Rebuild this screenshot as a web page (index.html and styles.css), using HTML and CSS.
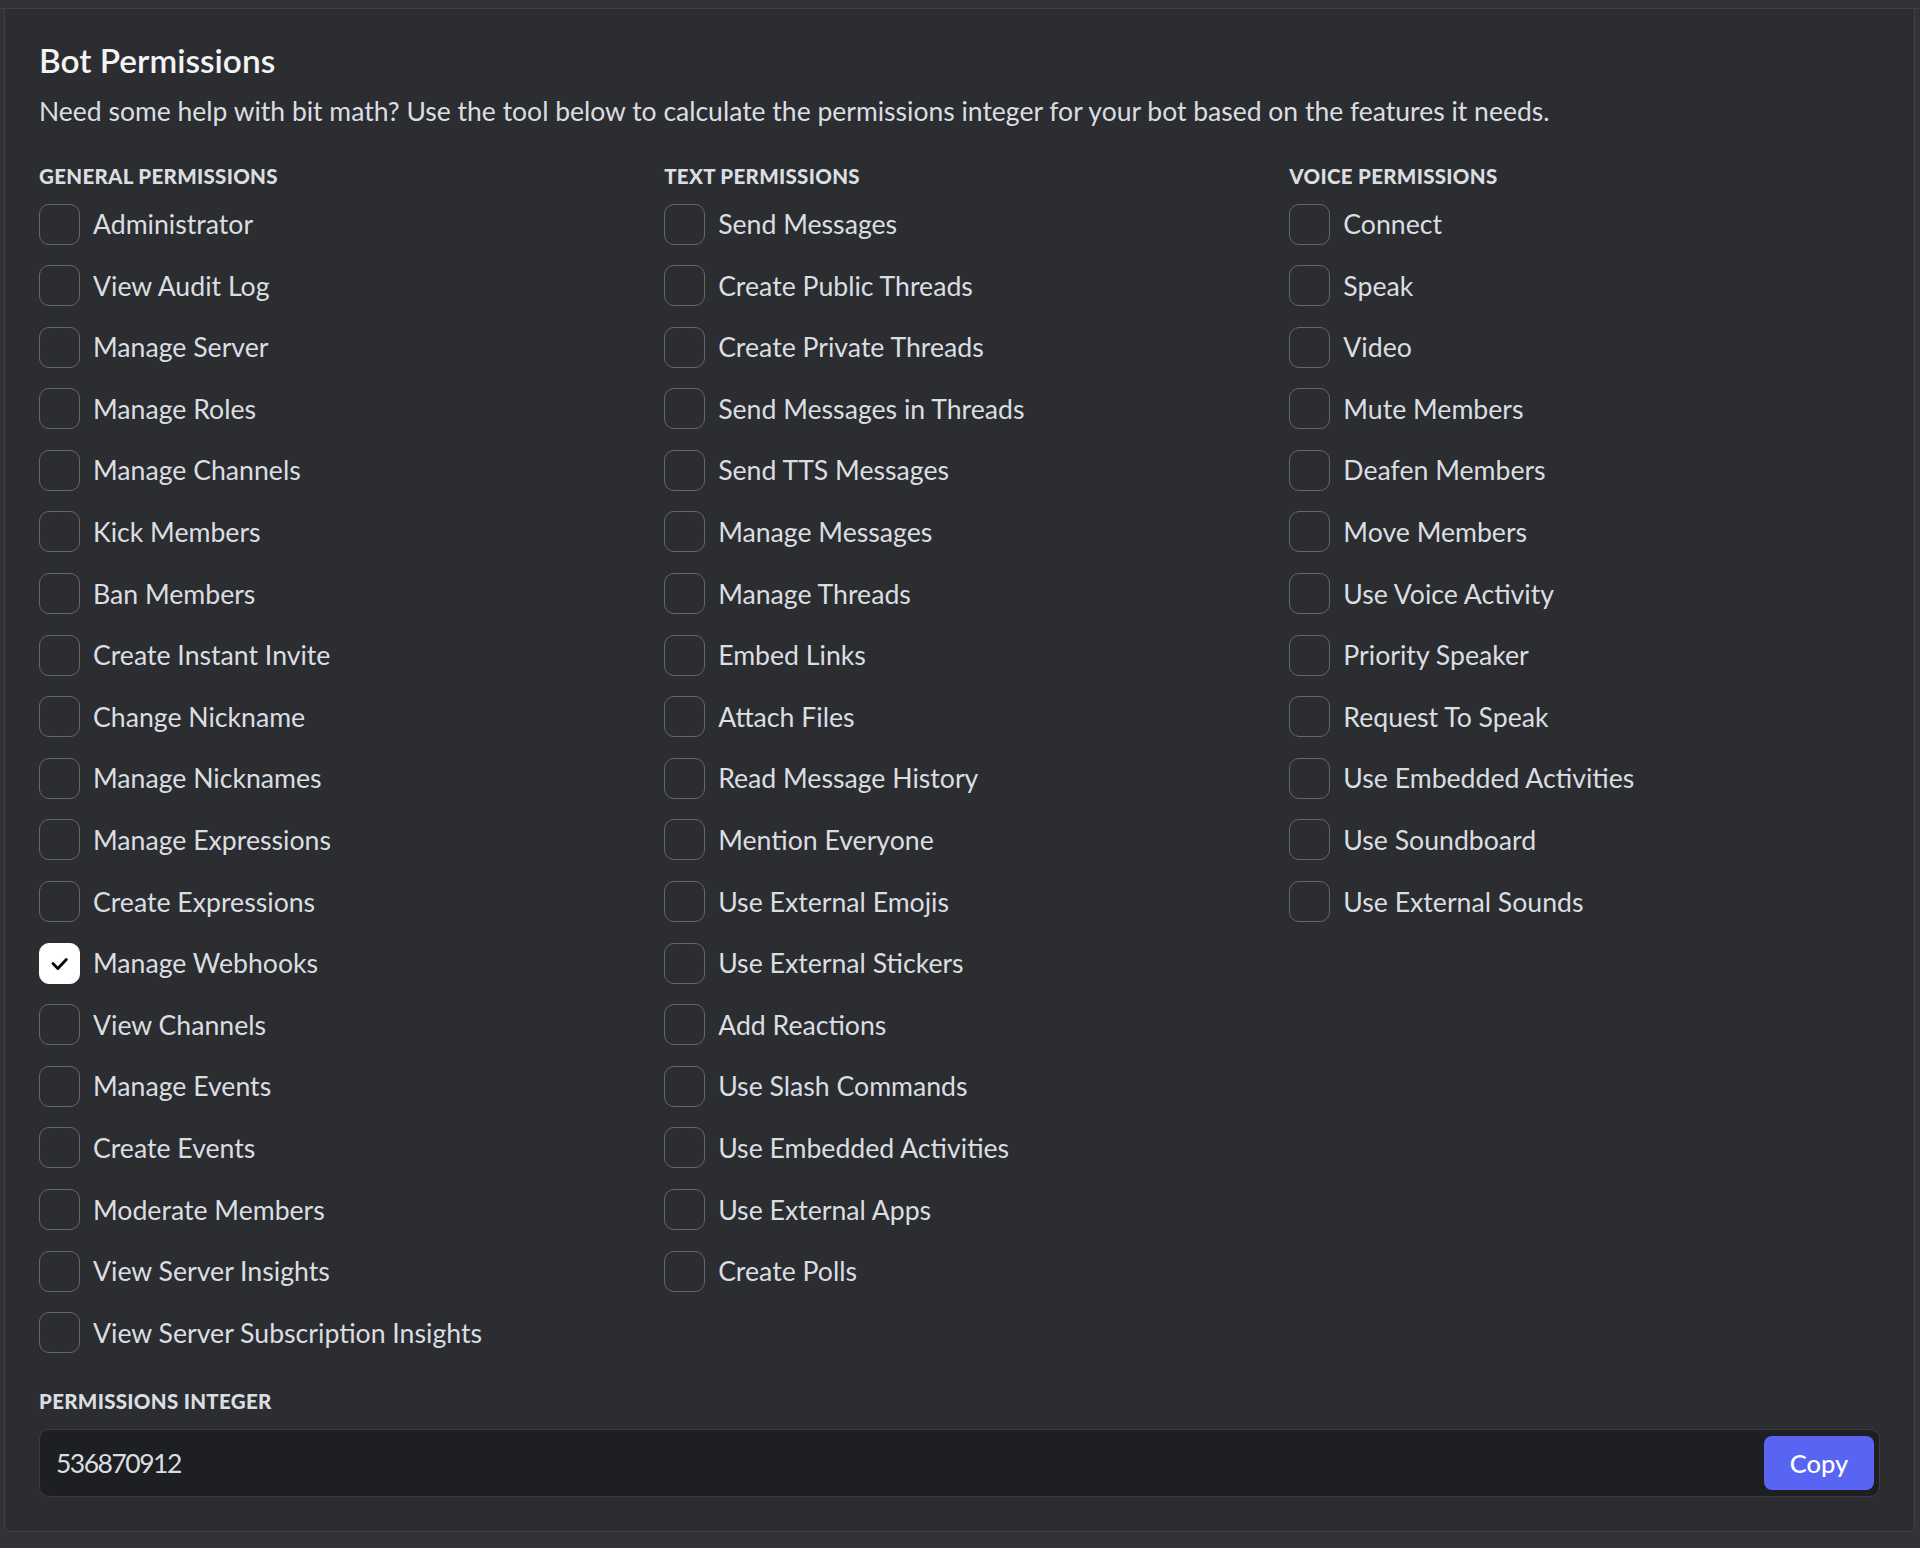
FILE: index.html
```html
<!DOCTYPE html>
<html lang="en">
<head>
<meta charset="utf-8">
<title>Bot Permissions</title>
<link rel="stylesheet" href="styles.css">
</head>
<body>
<div class="topbar"></div>
<section class="card">
  <h3 class="title">Bot Permissions</h3>
  <p class="desc">Need some help with bit math? Use the tool below to calculate the permissions integer for your bot based on the features it needs.</p>
  <div class="columns">
    <div class="col">
      <h5 class="sec-head">General Permissions</h5>
      <ul class="perm-list">
        <li class="perm"><span class="box"></span><span class="label">Administrator</span></li>
        <li class="perm"><span class="box"></span><span class="label">View Audit Log</span></li>
        <li class="perm"><span class="box"></span><span class="label">Manage Server</span></li>
        <li class="perm"><span class="box"></span><span class="label">Manage Roles</span></li>
        <li class="perm"><span class="box"></span><span class="label">Manage Channels</span></li>
        <li class="perm"><span class="box"></span><span class="label">Kick Members</span></li>
        <li class="perm"><span class="box"></span><span class="label">Ban Members</span></li>
        <li class="perm"><span class="box"></span><span class="label">Create Instant Invite</span></li>
        <li class="perm"><span class="box"></span><span class="label">Change Nickname</span></li>
        <li class="perm"><span class="box"></span><span class="label">Manage Nicknames</span></li>
        <li class="perm"><span class="box"></span><span class="label">Manage Expressions</span></li>
        <li class="perm"><span class="box"></span><span class="label">Create Expressions</span></li>
        <li class="perm"><span class="box checked"><svg class="check" viewBox="0 0 40 40"><path d="M13.3 20.6 L18.3 25.6 L27 16.4" fill="none" stroke="#060607" stroke-width="2.9" stroke-linecap="round" stroke-linejoin="round"/></svg></span><span class="label">Manage Webhooks</span></li>
        <li class="perm"><span class="box"></span><span class="label">View Channels</span></li>
        <li class="perm"><span class="box"></span><span class="label">Manage Events</span></li>
        <li class="perm"><span class="box"></span><span class="label">Create Events</span></li>
        <li class="perm"><span class="box"></span><span class="label">Moderate Members</span></li>
        <li class="perm"><span class="box"></span><span class="label">View Server Insights</span></li>
        <li class="perm"><span class="box"></span><span class="label">View Server Subscription Insights</span></li>
      </ul>
    </div>
    <div class="col">
      <h5 class="sec-head">Text Permissions</h5>
      <ul class="perm-list">
        <li class="perm"><span class="box"></span><span class="label">Send Messages</span></li>
        <li class="perm"><span class="box"></span><span class="label">Create Public Threads</span></li>
        <li class="perm"><span class="box"></span><span class="label">Create Private Threads</span></li>
        <li class="perm"><span class="box"></span><span class="label">Send Messages in Threads</span></li>
        <li class="perm"><span class="box"></span><span class="label">Send TTS Messages</span></li>
        <li class="perm"><span class="box"></span><span class="label">Manage Messages</span></li>
        <li class="perm"><span class="box"></span><span class="label">Manage Threads</span></li>
        <li class="perm"><span class="box"></span><span class="label">Embed Links</span></li>
        <li class="perm"><span class="box"></span><span class="label">Attach Files</span></li>
        <li class="perm"><span class="box"></span><span class="label">Read Message History</span></li>
        <li class="perm"><span class="box"></span><span class="label">Mention Everyone</span></li>
        <li class="perm"><span class="box"></span><span class="label">Use External Emojis</span></li>
        <li class="perm"><span class="box"></span><span class="label">Use External Stickers</span></li>
        <li class="perm"><span class="box"></span><span class="label">Add Reactions</span></li>
        <li class="perm"><span class="box"></span><span class="label">Use Slash Commands</span></li>
        <li class="perm"><span class="box"></span><span class="label">Use Embedded Activities</span></li>
        <li class="perm"><span class="box"></span><span class="label">Use External Apps</span></li>
        <li class="perm"><span class="box"></span><span class="label">Create Polls</span></li>
      </ul>
    </div>
    <div class="col">
      <h5 class="sec-head">Voice Permissions</h5>
      <ul class="perm-list">
        <li class="perm"><span class="box"></span><span class="label">Connect</span></li>
        <li class="perm"><span class="box"></span><span class="label">Speak</span></li>
        <li class="perm"><span class="box"></span><span class="label">Video</span></li>
        <li class="perm"><span class="box"></span><span class="label">Mute Members</span></li>
        <li class="perm"><span class="box"></span><span class="label">Deafen Members</span></li>
        <li class="perm"><span class="box"></span><span class="label">Move Members</span></li>
        <li class="perm"><span class="box"></span><span class="label">Use Voice Activity</span></li>
        <li class="perm"><span class="box"></span><span class="label">Priority Speaker</span></li>
        <li class="perm"><span class="box"></span><span class="label">Request To Speak</span></li>
        <li class="perm"><span class="box"></span><span class="label">Use Embedded Activities</span></li>
        <li class="perm"><span class="box"></span><span class="label">Use Soundboard</span></li>
        <li class="perm"><span class="box"></span><span class="label">Use External Sounds</span></li>
      </ul>
    </div>
  </div>
  <h5 class="sec-head int-head">Permissions Integer</h5>
  <div class="int-field">
    <span class="int-value">536870912</span>
    <button class="copy-btn" type="button">Copy</button>
  </div>
</section>
</body>
</html>
```

FILE: styles.css
```css
* {
  box-sizing: border-box;
}

html, body {
  margin: 0;
  padding: 0;
}

body {
  background: #313338;
  font-family: Lato, "Noto Sans", sans-serif;
  color: #dbdee1;
  min-height: 1548px;
}

.topbar {
  height: 9px;
  border-bottom: 1px solid #3f4147;
}

.card {
  margin: 0 5px 0 4px;
  background: #2b2d31;
  border: 1px solid #3f4147;
  border-top: none;
  border-radius: 0 0 6px 6px;
  padding: 31px 34px 34px 34px;
}

.title {
  margin: 0;
  font-size: 33.4px;
  line-height: 40px;
  font-weight: 600;
  color: #f2f3f5;
}

.desc {
  margin: 13px 0 0 0;
  font-size: 26.5px;
  line-height: 36px;
  color: #dbdee1;
}

.columns {
  display: grid;
  grid-template-columns: repeat(3, 1fr);
  column-gap: 34.5px;
  margin-top: 35px;
  align-items: start;
}

.col {
  min-width: 0;
}

.sec-head {
  margin: 0;
  font-size: 20.5px;
  line-height: 24px;
  font-weight: 900;
  text-transform: uppercase;
  color: #dbdee1;
  letter-spacing: 0.3px;
}

.perm-list {
  list-style: none;
  margin: 16px 0 0 0;
  padding: 0;
  display: flex;
  flex-direction: column;
  gap: 21.6px;
}

.perm {
  display: flex;
  align-items: center;
  height: 40px;
}

.box {
  flex: none;
  width: 41px;
  height: 41px;
  border: 1.5px solid #65676e;
  border-radius: 10px;
  margin-right: 13px;
  display: flex;
  align-items: center;
  justify-content: center;
}

.box.checked {
  background: #ffffff;
  border-color: #ffffff;
}

.check {
  width: 40px;
  height: 40px;
  display: block;
}

.label {
  font-size: 26.65px;
  line-height: 36px;
  color: #dbdee1;
  white-space: nowrap;
}

.int-head {
  margin-top: 36px;
}

.int-field {
  margin-top: 16px;
  height: 68px;
  background: #1e1f22;
  border: 1px solid #3a3c42;
  border-radius: 10px;
  display: flex;
  align-items: center;
  justify-content: space-between;
  padding: 0 5px 0 16px;
}

.int-value {
  font-size: 26.5px;
  letter-spacing: -1.5px;
  color: #dbdee1;
}

.copy-btn {
  width: 110px;
  height: 54px;
  border: none;
  border-radius: 8px;
  background: #5865f2;
  color: #ffffff;
  font-family: Lato, "Noto Sans", sans-serif;
  font-size: 25.5px;
  font-weight: 500;
  cursor: pointer;
}
```
